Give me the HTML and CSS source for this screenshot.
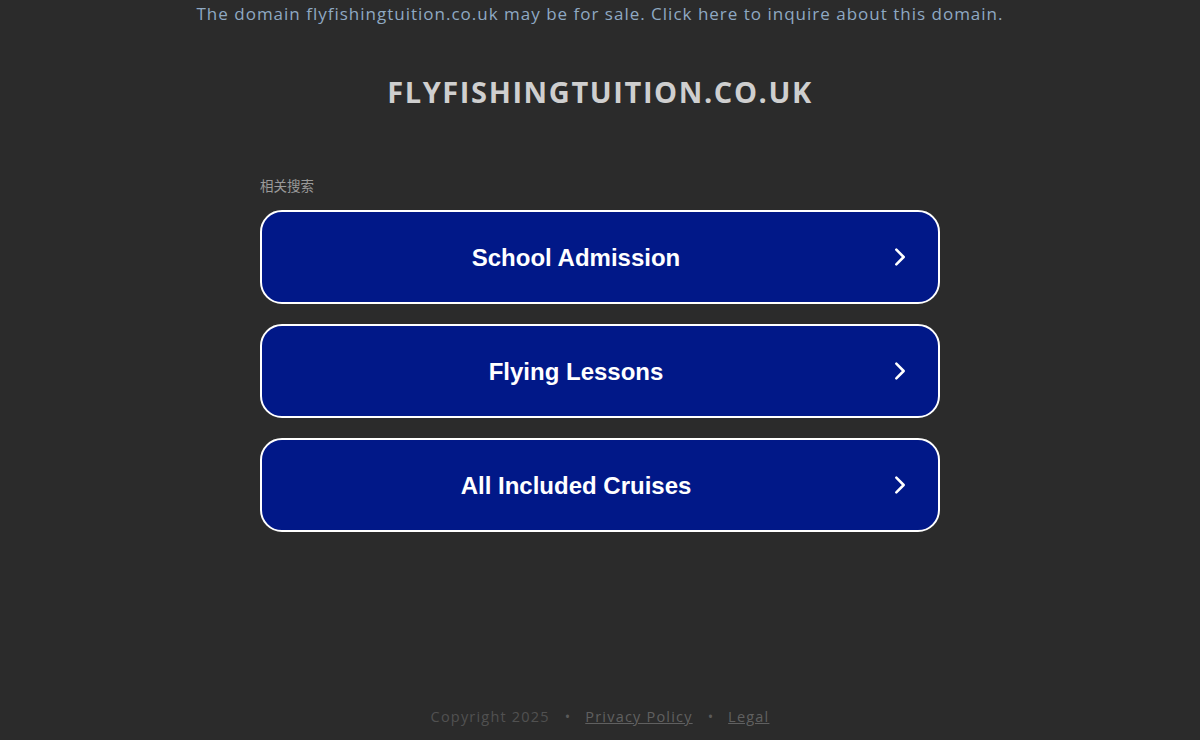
FILE: index.html
```html
<!DOCTYPE html>
<html lang="en">

<head>
    <meta charset="UTF-8">
    <meta name="viewport" content="width=device-width, initial-scale=1.0">
    <title>flyfishingtuition.co.uk</title>
    <link rel="stylesheet" href="styles.css">
</head>

<body>
    <div class="page">
        <div class="sale">The domain flyfishingtuition.co.uk may be for sale. Click here to inquire about this domain.</div>
        <h1 class="domain">FLYFISHINGTUITION.CO.UK</h1>

        <main class="searches">
            <div class="label">相关搜索</div>
            <a class="btn" href="#">
                <span class="btn-text">School Admission</span>
                <svg class="arrow" viewBox="0 0 24 24"><path d="M8 4 L16 12 L8 20" /></svg>
            </a>
            <a class="btn" href="#">
                <span class="btn-text">Flying Lessons</span>
                <svg class="arrow" viewBox="0 0 24 24"><path d="M8 4 L16 12 L8 20" /></svg>
            </a>
            <a class="btn" href="#">
                <span class="btn-text">All Included Cruises</span>
                <svg class="arrow" viewBox="0 0 24 24"><path d="M8 4 L16 12 L8 20" /></svg>
            </a>
        </main>

        <footer class="footer">
            <span>Copyright 2025</span>
            <span class="dot">•</span>
            <a href="#">Privacy Policy</a>
            <span class="dot">•</span>
            <a href="#">Legal</a>
        </footer>
    </div>
</body>

</html>
```

FILE: styles.css
```css
* {
    box-sizing: border-box;
}

body {
    margin: 0px;
    padding: 0px;
    background-color: #2b2b2b;
    font-family: "Open Sans", "Noto Sans", sans-serif;
}

.page {
    min-height: 740px;
    display: flex;
    flex-direction: column;
    align-items: center;
}

.sale {
    padding-top: 2px;
    font-size: 17px;
    letter-spacing: 1px;
    color: #8fa9c3;
    text-align: center;
}

.domain {
    margin: 47px 0 0 0;
    font-size: 29px;
    font-weight: 700;
    color: #cfcfcf;
    letter-spacing: 1.6px;
}

.searches {
    width: 680px;
    margin-top: 64px;
    display: flex;
    flex-direction: column;
    gap: 20px;
}

.label {
    font-family: "Noto Sans CJK SC", sans-serif;
    font-size: 13.5px;
    color: #9a9a9a;
    margin-bottom: -13px;
    padding-bottom: 8px;
}

.btn {
    height: 94px;
    border: 2px solid #ffffff;
    border-radius: 22px;
    background-color: #011888;
    display: flex;
    align-items: center;
    justify-content: center;
    position: relative;
    text-decoration: none;
}

.btn-text {
    font-family: "Liberation Sans", Arial, sans-serif;
    font-weight: 700;
    font-size: 24px;
    color: #ffffff;
    margin-right: 48px;
    padding-top: 2px;
}

.arrow {
    position: absolute;
    right: 27px;
    top: 34px;
    width: 22px;
    height: 22px;
}

.arrow path {
    fill: none;
    stroke: #ffffff;
    stroke-width: 2.8;
    stroke-linecap: round;
    stroke-linejoin: round;
}

.footer {
    margin-top: auto;
    padding-bottom: 14px;
    display: flex;
    gap: 15px;
    font-size: 14.5px;
    color: #515151;
    letter-spacing: 1.2px;
}

.footer a {
    color: #606060;
    text-decoration: underline;
}

.dot {
    color: #5a5a5a;
    letter-spacing: 0;
}
```
